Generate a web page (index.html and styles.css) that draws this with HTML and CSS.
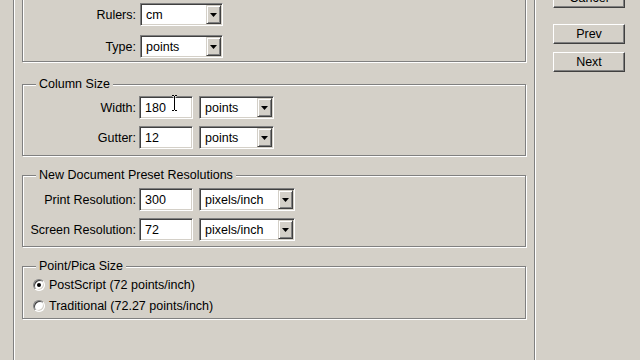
FILE: index.html
```html
<!DOCTYPE html>
<html>
<head>
<meta charset="utf-8">
<link rel="stylesheet" href="styles.css">
</head>
<body>
<div class="page">
  <div class="pane">
    <div class="group g1">
      <div class="row">
        <span class="lbl">Rulers:</span>
        <div class="select w-rulers"><span class="val">cm</span><span class="dd"><svg width="7" height="4" viewBox="0 0 7 4"><polygon points="0,0 7,0 3.5,4" fill="#000"/></svg></span></div>
      </div>
      <div class="row r-gap9">
        <span class="lbl">Type:</span>
        <div class="select w-rulers"><span class="val">points</span><span class="dd"><svg width="7" height="4" viewBox="0 0 7 4"><polygon points="0,0 7,0 3.5,4" fill="#000"/></svg></span></div>
      </div>
    </div>

    <div class="group g2">
      <div class="legend">Column Size</div>
      <div class="row r-first4">
        <span class="lbl">Width:</span>
        <div class="input"><span class="val">180</span><svg class="ibeam" width="7" height="16" viewBox="0 0 7 16"><path d="M1,0.5H3M4,0.5H6M3.5,1V15M1,15.5H3M4,15.5H6" stroke="#fff" stroke-width="2.2" fill="none"/><path d="M1,0.5H3M4,0.5H6M3.5,1V15M1,15.5H3M4,15.5H6" stroke="#000" stroke-width="1" fill="none"/></svg></div>
        <div class="select w-points"><span class="val">points</span><span class="dd"><svg width="7" height="4" viewBox="0 0 7 4"><polygon points="0,0 7,0 3.5,4" fill="#000"/></svg></span></div>
      </div>
      <div class="row r-gap7">
        <span class="lbl">Gutter:</span>
        <div class="input"><span class="val">12</span></div>
        <div class="select w-points"><span class="val">points</span><span class="dd"><svg width="7" height="4" viewBox="0 0 7 4"><polygon points="0,0 7,0 3.5,4" fill="#000"/></svg></span></div>
      </div>
    </div>

    <div class="group g3">
      <div class="legend">New Document Preset Resolutions</div>
      <div class="row r-first5">
        <span class="lbl">Print Resolution:</span>
        <div class="input"><span class="val">300</span></div>
        <div class="select w-px"><span class="val">pixels/inch</span><span class="dd"><svg width="7" height="4" viewBox="0 0 7 4"><polygon points="0,0 7,0 3.5,4" fill="#000"/></svg></span></div>
      </div>
      <div class="row r-gap7">
        <span class="lbl">Screen Resolution:</span>
        <div class="input"><span class="val">72</span></div>
        <div class="select w-px"><span class="val">pixels/inch</span><span class="dd"><svg width="7" height="4" viewBox="0 0 7 4"><polygon points="0,0 7,0 3.5,4" fill="#000"/></svg></span></div>
      </div>
    </div>

    <div class="group g4">
      <div class="legend">Point/Pica Size</div>
      <div class="radio-row"><span class="radio checked"></span><span>PostScript (72 points/inch)</span></div>
      <div class="radio-row"><span class="radio"></span><span>Traditional (72.27 points/inch)</span></div>
    </div>
  </div>

  <div class="side">
    <div class="pbtn cancel">Cancel</div>
    <div class="pbtn prev">Prev</div>
    <div class="pbtn next">Next</div>
  </div>
</div>
</body>
</html>
```

FILE: styles.css
```css
* { box-sizing: border-box; }
html, body {
  margin: 0;
  padding: 0;
  background: #d4d0c8;
}
body {
  font-family: "Liberation Sans", Arial, sans-serif;
  font-size: 12.5px;
  color: #000;
}
.page {
  display: flex;
  width: 640px;
  height: 360px;
  overflow: hidden;
  background: #d4d0c8;
}
.pane {
  margin-left: 13px;
  width: 522px;
  height: 360px;
  border-left: 1px solid #808080;
  border-right: 1px solid #808080;
  box-shadow: inset 1px 0 0 #fff, 1px 0 0 #fff;
  padding: 0 8px 0 8px;
  display: flex;
  flex-direction: column;
}
.group {
  border: 1px solid #808080;
  box-shadow: inset 1px 1px 0 #fff, 1px 1px 0 #fff;
  display: flex;
  flex-direction: column;
  flex-shrink: 0;
}
.g1 { margin-top: -10px; padding: 12px 0 3px 0; }
.g2 { margin-top: 22px; padding-bottom: 6px; }
.g3 { margin-top: 19px; padding-bottom: 5px; }
.g4 { margin-top: 19px; padding-bottom: 2px; }

.legend {
  align-self: flex-start;
  margin: -8px 0 0 13px;
  padding: 0 3px;
  line-height: 15px;
  height: 15px;
  background: #d4d0c8;
  white-space: nowrap;
}
.row {
  display: flex;
  align-items: center;
  height: 23px;
}
.r-gap9 { margin-top: 9px; }
.r-gap7 { margin-top: 7px; }
.r-first4 { margin-top: 4px; }
.r-first5 { margin-top: 5px; }
.lbl {
  width: 113px;
  text-align: right;
  margin-right: 3px;
  white-space: nowrap;
}
.g1 .lbl { width: 113px; margin-right: 4px; }

.select, .input {
  height: 23px;
  background: #fff;
  border: 1px solid;
  border-color: #808080 #fff #fff #808080;
  box-shadow: inset 1px 1px 0 #404040, inset -1px -1px 0 #d4d0c8;
  padding: 1px;
  display: flex;
  align-items: center;
  position: relative;
}
.input { width: 54px; margin-right: 6px; }
.val { padding-left: 4px; flex: 1; white-space: nowrap; }
.w-rulers { width: 83px; }
.w-points { width: 75px; }
.w-px { width: 96px; }
.select .val { padding-top: 1px; }
.dd {
  width: 15px;
  height: 19px;
  flex: 0 0 15px;
  background: #d4d0c8;
  border: 1px solid;
  border-color: #d4d0c8 #404040 #404040 #d4d0c8;
  box-shadow: inset 1px 1px 0 #fff, inset -1px -1px 0 #808080;
  display: flex;
  align-items: center;
  justify-content: center;
}
.dd svg { display: block; margin-top: 1px; }
.ibeam {
  position: absolute;
  left: 31px;
  top: -2px;
}

.radio-row {
  display: flex;
  align-items: center;
  height: 21px;
  padding-left: 10px;
}
.radio {
  width: 12px;
  height: 12px;
  border-radius: 50%;
  background: #fff;
  border: 1px solid;
  border-color: #808080 #fff #fff #808080;
  box-shadow: inset 1px 1px 0 #404040, inset -1px -1px 0 #d4d0c8;
  margin-right: 4px;
  display: flex;
  align-items: center;
  justify-content: center;
  flex: 0 0 12px;
}
.radio.checked::after {
  content: "";
  width: 4px;
  height: 4px;
  border-radius: 50%;
  background: #000;
}

.side {
  padding-left: 18px;
  display: flex;
  flex-direction: column;
}
.pbtn {
  width: 72px;
  height: 20px;
  background: #d4d0c8;
  border: 1px solid;
  border-color: #fff #404040 #404040 #fff;
  box-shadow: inset -1px -1px 0 #808080;
  display: flex;
  align-items: center;
  justify-content: center;
  flex-shrink: 0;
}
.cancel { margin-top: -12px; }
.prev { margin-top: 16px; }
.next { margin-top: 8px; }
```
